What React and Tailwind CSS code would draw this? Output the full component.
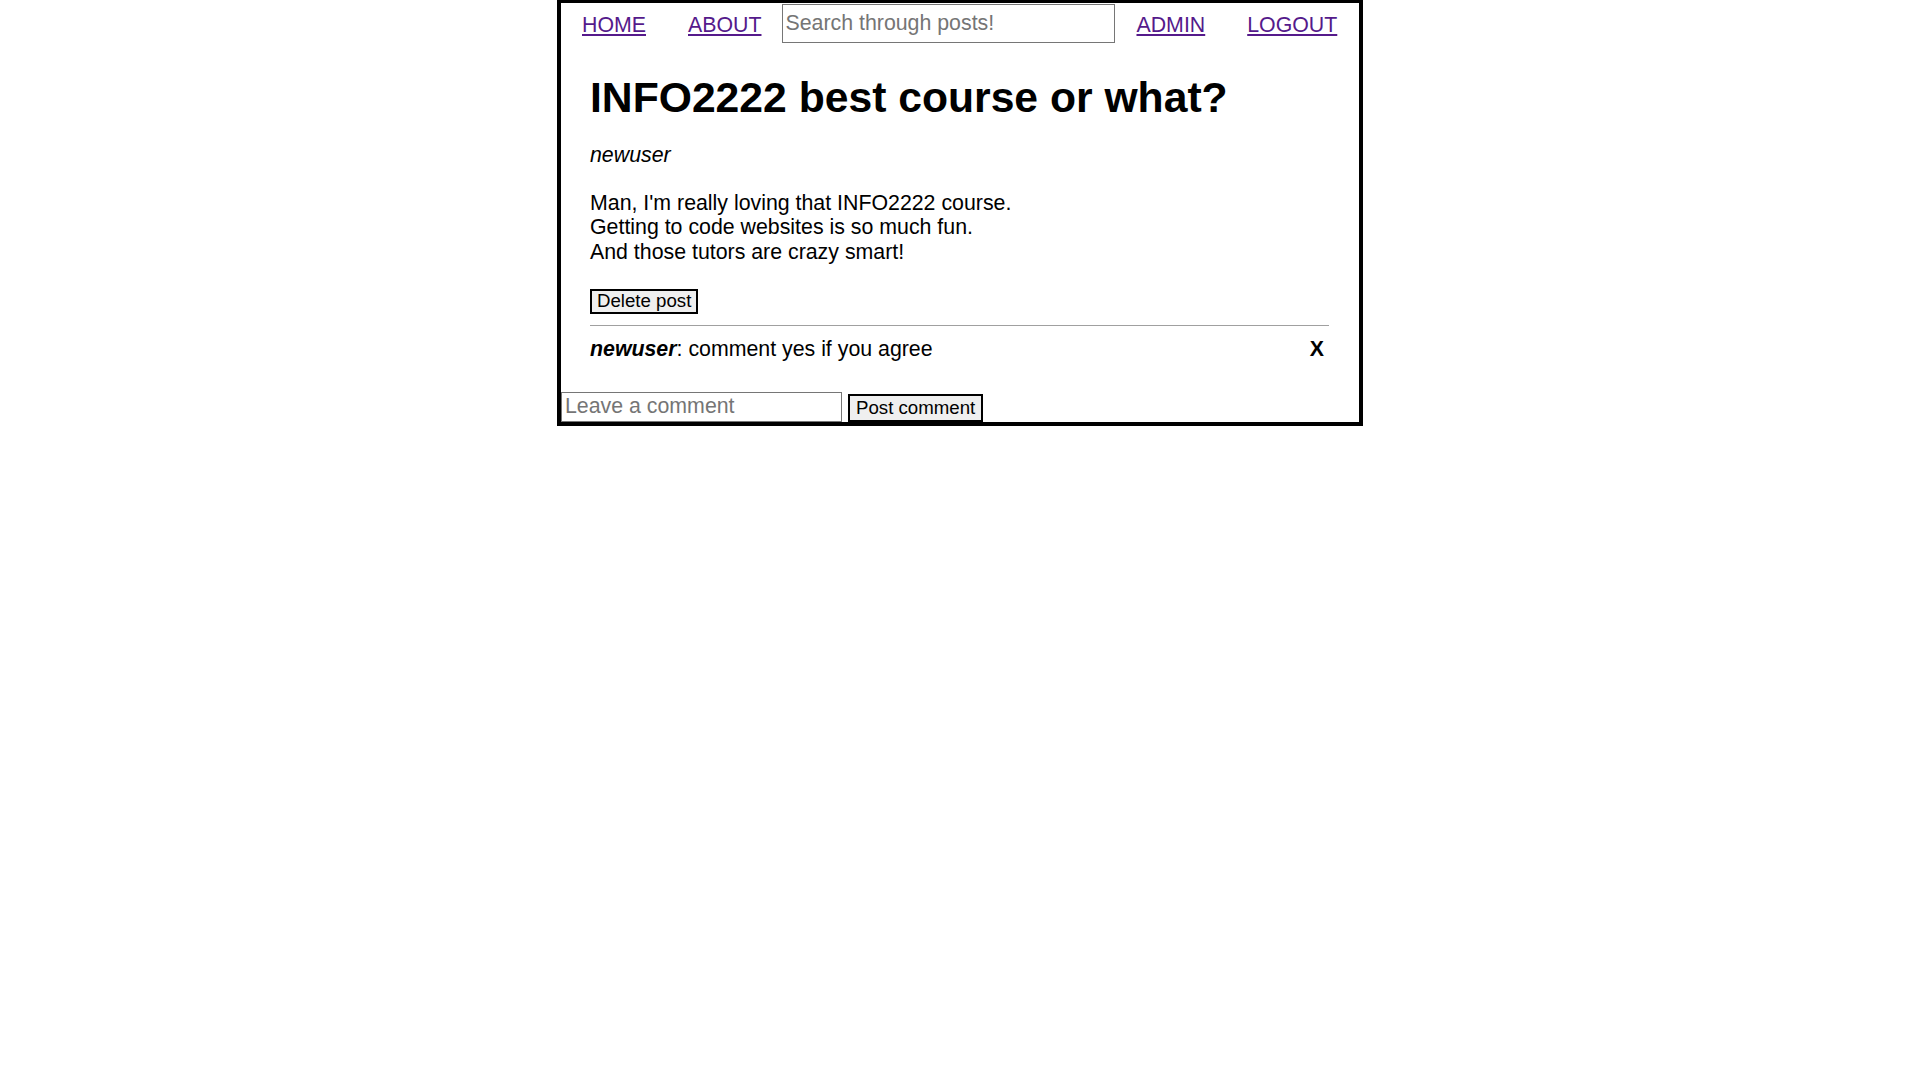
const NavLink = ({ children }) => (
  <a href="#" className="mt-[9.5px] px-[21px] text-[21.33px] leading-[24.5px] text-[#551a8b] underline">
    {children}
  </a>
);

const App = () => {
  return (
    <div className="min-h-screen bg-white font-['Liberation_Sans',Arial,sans-serif] text-black">
      <div className="mx-auto w-[806px] border-4 border-t-[3px] border-black">
        {/* Nav */}
        <nav className="flex items-start">
          <NavLink>HOME</NavLink>
          <NavLink>ABOUT</NavLink>
          <input
            type="text"
            placeholder="Search through posts!"
            className="mt-[1px] h-[39px] w-[333px] border border-[#767676] px-[2px] text-[21.33px] placeholder:text-[#757575] outline-none"
          />
          <NavLink>ADMIN</NavLink>
          <NavLink>LOGOUT</NavLink>
        </nav>

        {/* Post */}
        <div className="pl-[29px] pr-[30px]">
          <h1 className="mt-[30px] text-[42.67px] leading-[49px] font-bold">
            INFO2222 best course or what?
          </h1>
          <p className="mt-[21px] text-[21.33px] leading-[24.5px] italic">newuser</p>
          <p className="mt-[23px] text-[21.33px] leading-[24.5px]">
            Man, I'm really loving that INFO2222 course.
            <br />
            Getting to code websites is so much fun.
            <br />
            And those tutors are crazy smart!
          </p>
          <button className="mt-[25px] flex h-[25px] items-center border-2 border-black bg-[#efefef] px-[5px] text-[18.67px] leading-none">
            Delete post
          </button>
          <hr className="mt-[11px] border-t border-[#a0a0a0]" />

          {/* Comments */}
          <div className="mt-[10.5px] flex items-baseline justify-between text-[21.33px] leading-[24.5px]">
            <p>
              <span className="font-bold italic">newuser</span>: comment yes if you agree
            </p>
            <button className="pr-[5px] font-bold">X</button>
          </div>
        </div>

        {/* Comment form */}
        <form className="mt-[31px] flex items-end gap-[6px]" onSubmit={(e) => e.preventDefault()}>
          <input
            type="text"
            placeholder="Leave a comment"
            className="h-[30px] w-[281px] border border-[#767676] px-[3px] text-[21.33px] placeholder:text-[#757575] outline-none"
          />
          <button className="flex h-[28px] items-center border-2 border-black bg-[#efefef] px-[6px] text-[18.67px] leading-none">
            Post comment
          </button>
        </form>
      </div>
    </div>
  );
};

export default App;
